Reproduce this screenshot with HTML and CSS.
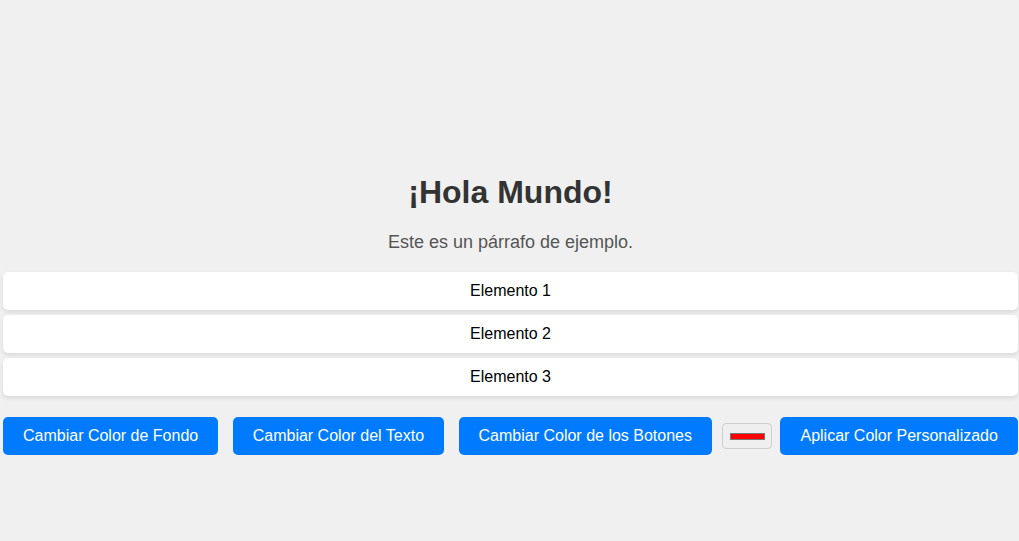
FILE: index.html
```html
<!DOCTYPE html>
<html lang="es">
<head>
<meta charset="utf-8">
<title>¡Hola Mundo!</title>
<link rel="stylesheet" href="styles.css">
</head>
<body>
  <main class="app">
    <h1 class="title">¡Hola Mundo!</h1>
    <p class="intro">Este es un párrafo de ejemplo.</p>
    <ul class="item-list">
      <li class="item">Elemento 1</li>
      <li class="item">Elemento 2</li>
      <li class="item">Elemento 3</li>
    </ul>
    <div class="controls">
      <div class="control-group">
        <button class="btn">Cambiar Color de Fondo</button>
        <button class="btn">Cambiar Color del Texto</button>
        <button class="btn">Cambiar Color de los Botones</button>
      </div>
      <div class="custom-group">
        <input class="color-picker" type="color" value="#ff0000">
        <button class="btn">Aplicar Color Personalizado</button>
      </div>
    </div>
  </main>
</body>
</html>
```

FILE: styles.css
```css
html, body {
  margin: 0;
  padding: 0;
}

body {
  background: #f0f0f0;
  font-family: "Liberation Sans", Arial, sans-serif;
  width: 1019px;
  height: 541px;
  overflow: hidden;
}

.app {
  display: flex;
  flex-direction: column;
  padding: 174px 1px 0 3px;
}

.title {
  margin: 0 0 21px;
  font-size: 32px;
  font-weight: bold;
  color: #333333;
  text-align: center;
  line-height: 37px;
}

.intro {
  margin: 0 0 19px;
  font-size: 18px;
  color: #555555;
  text-align: center;
  line-height: 21px;
}

.item-list {
  list-style: none;
  margin: 0;
  padding: 0;
  display: flex;
  flex-direction: column;
  gap: 5px;
}

.item {
  background: #ffffff;
  border-radius: 5px;
  box-shadow: 0 2px 4px rgba(0, 0, 0, 0.1);
  padding: 10px;
  font-size: 16px;
  line-height: 18px;
  color: #000000;
  text-align: center;
}

.controls {
  display: flex;
  align-items: center;
  gap: 10px;
  margin-top: 21px;
}

.control-group {
  display: flex;
  gap: 14.5px;
}

.custom-group {
  display: flex;
  align-items: center;
  gap: 8.5px;
}

.btn {
  background: #007bff;
  color: #ffffff;
  border: none;
  border-radius: 5px;
  padding: 10px 20px;
  font-family: "Liberation Sans", Arial, sans-serif;
  font-size: 16px;
  line-height: 18px;
  cursor: pointer;
  white-space: nowrap;
}

.color-picker {
  -webkit-appearance: none;
  appearance: none;
  width: 50px;
  height: 26px;
  margin: 0;
  padding: 0;
  border: 1px solid #cfcfcf;
  border-radius: 4px;
  background: #efefef;
  box-sizing: border-box;
  cursor: pointer;
}

.color-picker::-webkit-color-swatch-wrapper {
  padding: 9px 6px 8px 7px;
}

.color-picker::-webkit-color-swatch {
  border: 1px solid #777777;
  border-radius: 0;
}
```
